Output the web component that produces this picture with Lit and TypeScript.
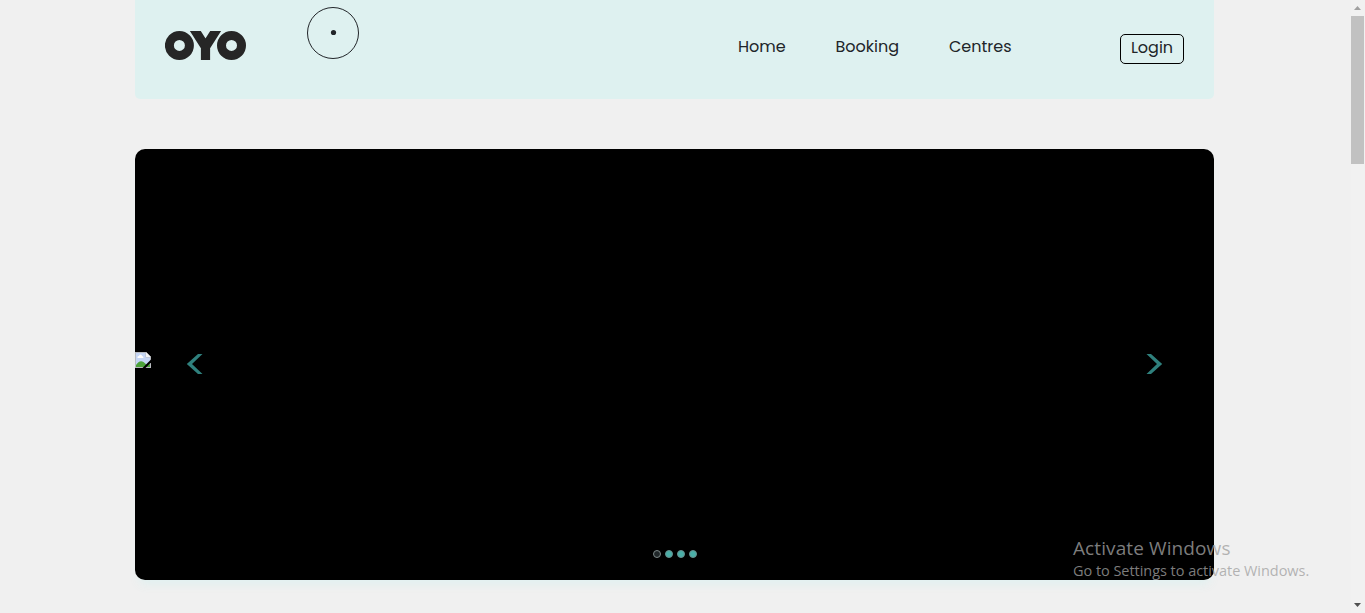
import { LitElement, html, css, svg } from "lit";
import { customElement } from "lit/decorators.js";

@customElement("site-header")
class SiteHeader extends LitElement {
  static styles = css`
    :host { display: block; }
    .bar {
      box-sizing: border-box; height: 99px; padding: 30px 30px 0; display: flex; align-items: flex-start;
      background: #def1f0; border-radius: 0 0 5px 5px; color: #212529;
      font: 400 16px/24px Poppins, Inter, "Open Sans", sans-serif;
    }
    .logo { display: block; width: 82px; height: 31px; }
    .links { display: flex; gap: 50px; margin: 5px 108px 0 auto; }
    .link { white-space: nowrap; }
    .home { width: 47.5px; }
    .booking { width: 63.5px; }
    .centres { width: 63px; }
    .login {
      box-sizing: border-box; width: 64px; height: 30px; margin-top: 4px; border: 1px solid #000;
      border-radius: 5px; background: none; padding: 0 0 2px; color: #212529; font: inherit; line-height: 26px;
      text-align: center;
    }
  `;
  render() {
    return html`<header class="bar">
      <svg class="logo" viewBox="0 0 82 31" aria-label="OYO" role="img">
        <g fill="none" stroke="#262626">
          <circle cx="14.4" cy="15.4" r="10" stroke-width="9" />
          <circle cx="66.5" cy="15.4" r="10" stroke-width="9" />
          <svg x="0" y="1" width="82" height="29" viewBox="0 1 82 29">
            <path d="M27.8-3 40.5 17 53.2-3M40.5 15V32" stroke-width="9.2" />
          </svg>
        </g>
      </svg>
      <nav class="links">
        <span class="link home">Home</span>
        <span class="link booking">Booking</span>
        <span class="link centres">Centres</span>
      </nav>
      <button class="login">Login</button>
    </header>`;
  }
}

@customElement("image-carousel")
class ImageCarousel extends LitElement {
  static styles = css`
    :host { display: block; }
    .stage {
      box-sizing: border-box; height: 431px; background: #000; border-radius: 10px;
      display: grid; grid-template: 1fr 36px / 51px 1fr 51px; align-items: center;
      box-shadow: 0 8px 10px -4px rgba(222, 241, 240, 0.9);
    }
    .picture { display: block; width: 16px; height: 16px; margin-top: 27px; }
    .arrows { display: flex; justify-content: space-between; margin-top: 35px; }
    .arrow { display: block; width: 17px; height: 22px; }
    .dots { grid-column: 1 / -1; align-self: start; display: flex; justify-content: center; gap: 4px; margin-top: 6px; }
    .dot { box-sizing: border-box; width: 8px; height: 8px; border: 1px solid #678f8d; border-radius: 50%; background: #4aafa8; }
    .current { background: #202729; border-color: #7c8888; }
  `;
  render() {
    const arrow = (d: string) => html`<svg class="arrow" viewBox="0 0 17 22">
      ${svg`<path d=${d} fill="#2f807d" />`}
    </svg>`;
    return html`<section class="stage">
      <svg class="picture" viewBox="0 0 16 16" role="img">
        <path d="M0 0H11L16 5V16H0Z" fill="#b8bbc0" />
        <path d="M1 1H10.5V5.5H15V15H1Z" fill="#c5d6f5" />
        <path d="M11 0 16 5H11Z" fill="#f3f4f6" />
        <path d="M2.5 6V5Q2.5 4 4 4Q4.2 2.5 5.5 2.5Q7 2.5 7 4Q8.5 4 8.5 6Z" fill="#fff" />
        <path d="M1 15V13Q4.5 7.5 8.5 10L12 13L15 12V15Z" fill="#4da33b" />
        <path d="M7.5 16 16 7.5V10.5L10.5 16Z" fill="#000" />
      </svg>
      <div class="arrows">
        ${arrow("M12 1H16.5L6 11L16.5 21H12L0.8 11Z")}
        ${arrow("M0.5 1H5L16.2 11L5 21H0.5L11 11Z")}
      </div>
      <div class="dots">
        ${[0, 1, 2, 3].map((i) => html`<span class="dot ${i === 0 ? "current" : ""}"></span>`)}
      </div>
    </section>`;
  }
}

@customElement("app-root")
class AppRoot extends LitElement {
  static styles = css`
    :host { display: block; position: relative; height: 613px; overflow: hidden; background: #f0f0f0; }
    .window { display: flex; height: 100%; }
    .page { box-sizing: border-box; flex: 1; padding: 0 137px 0 135px; display: flex; flex-direction: column; gap: 50px; }
    .scrollbar { width: 14px; display: flex; flex-direction: column; background: #f1f1f1; }
    .step { display: block; width: 14px; height: 16px; }
    .thumb { width: 13px; height: 148px; background: #c1c1c1; }
    .track { flex: 1; }
    .cursor { position: absolute; left: 307px; top: 7px; width: 52px; height: 52px; }
    .notice { position: absolute; left: 1073px; top: 535px; color: rgba(160, 160, 160, 0.78); font-family: "Segoe UI", "Open Sans", "Noto Sans", sans-serif; white-space: nowrap; }
    .title { font-size: 19px; line-height: 26px; letter-spacing: 0.1px; }
    .hint { font-size: 14.5px; line-height: 20px; letter-spacing: -0.04px; }
  `;
  render() {
    return html`<div class="window">
        <main class="page">
          <site-header></site-header>
          <image-carousel></image-carousel>
        </main>
        <div class="scrollbar">
          <svg class="step" viewBox="0 0 14 16"><path d="M3 10 6.5 6 10 10Z" fill="#a0a0a0" /></svg>
          <div class="thumb"></div>
          <div class="track"></div>
          <svg class="step" viewBox="0 0 14 16"><path d="M3 6H10L6.5 10Z" fill="#505050" /></svg>
        </div>
      </div>
      <svg class="cursor" viewBox="0 0 52 52">
        <circle cx="26" cy="26" r="25.5" fill="none" stroke="#212529" />
        <circle cx="26.5" cy="25.5" r="2.6" fill="#212529" />
      </svg>
      <div class="notice">
        <div class="title">Activate Windows</div>
        <div class="hint">Go to Settings to activate Windows.</div>
      </div>`;
  }
}
